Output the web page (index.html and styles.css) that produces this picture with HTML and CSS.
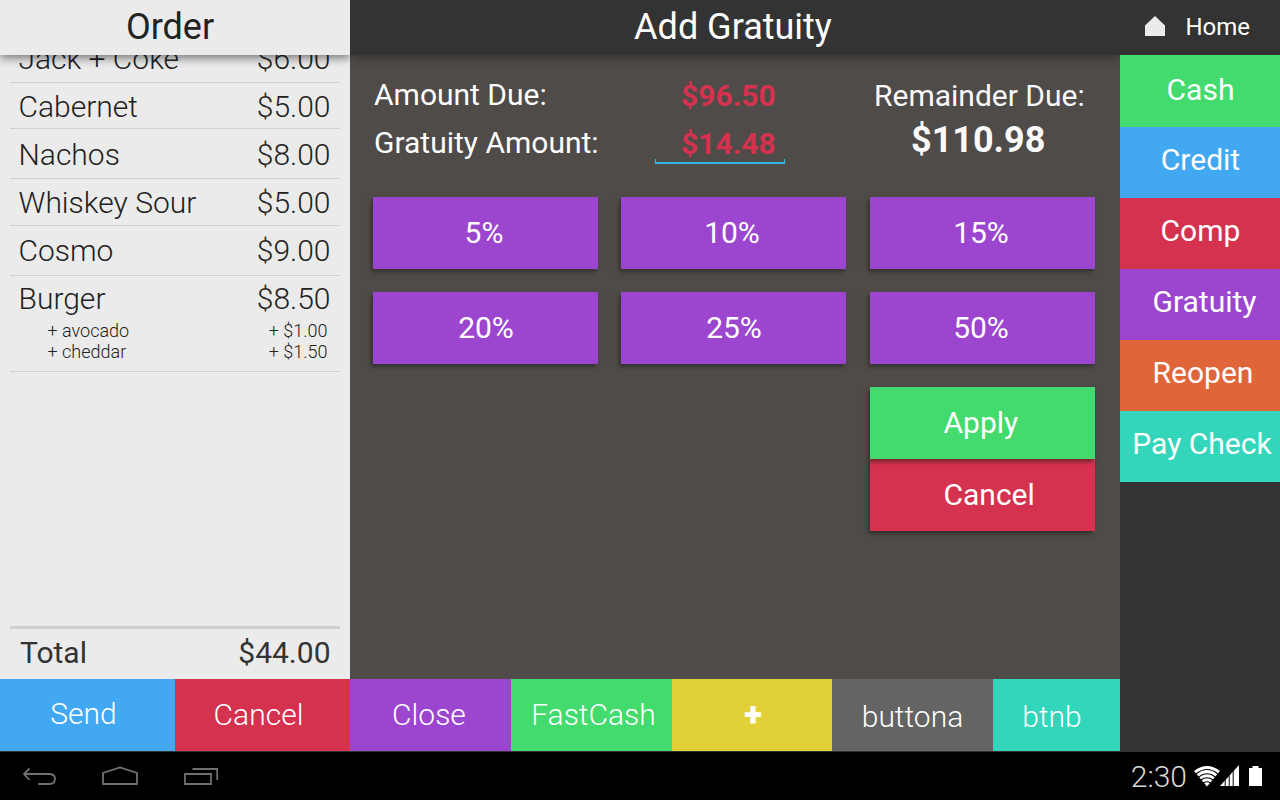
FILE: index.html
```html
<!DOCTYPE html>
<html lang="en">
<head>
<meta charset="utf-8">
<title>Add Gratuity</title>
<link rel="stylesheet" href="styles.css">
</head>
<body>
<div class="app">
  <div class="work">
    <div class="panels">
      <section class="order">
        <h1 class="order-title"><span>Order</span></h1>
        <div class="items">
          <div class="item jack"><span>Jack + Coke</span><span>$6.00</span></div>
          <div class="item cabernet"><span>Cabernet</span><span>$5.00</span></div>
          <div class="item nachos"><span>Nachos</span><span>$8.00</span></div>
          <div class="item whiskey"><span>Whiskey Sour</span><span>$5.00</span></div>
          <div class="item cosmo"><span>Cosmo</span><span>$9.00</span></div>
          <div class="item burger">
            <span>Burger</span><span>$8.50</span>
            <div class="extra"><span>+ avocado</span><span>+ $1.00</span></div>
            <div class="extra"><span>+ cheddar</span><span>+ $1.50</span></div>
          </div>
        </div>
        <div class="total"><span>Total</span><span>$44.00</span></div>
      </section>
      <main class="payment">
        <h1 class="payment-title"><span>Add Gratuity</span></h1>
        <div class="content">
          <div class="summary">
            <div class="labels"><div>Amount Due:</div><div>Gratuity Amount:</div></div>
            <div class="values"><div>$96.50</div><div class="field">$14.48</div></div>
            <div class="remainder"><div>Remainder Due:</div><strong>$110.98</strong></div>
          </div>
          <div class="choices">
            <button class="btn purple">5%</button>
            <button class="btn purple">10%</button>
            <button class="btn purple">15%</button>
            <button class="btn purple twenty">20%</button>
            <button class="btn purple twenty-five">25%</button>
            <button class="btn purple">50%</button>
            <div class="confirm">
              <button class="btn green apply">Apply</button>
              <button class="btn red">Cancel</button>
            </div>
          </div>
        </div>
      </main>
    </div>
    <div class="actions">
      <button class="blue send">Send</button>
      <button class="red cancel">Cancel</button>
      <button class="purple close">Close</button>
      <button class="green fast">FastCash</button>
      <button class="yellow plus">+</button>
      <button class="gray extra-a">buttona</button>
      <button class="teal extra-b">btnb</button>
    </div>
  </div>
  <aside class="side">
    <div class="home">
      <svg class="home-icon" width="20" height="20" viewBox="0 0 20 20"><path d="M0 20V9.500L10 0L20 9.500V20Z" fill="#ebebeb"/></svg>
      <span>Home</span>
    </div>
    <button class="tab green cash">Cash</button>
    <button class="tab blue">Credit</button>
    <button class="tab red">Comp</button>
    <button class="tab purple gratuity">Gratuity</button>
    <button class="tab orange reopen">Reopen</button>
    <button class="tab teal paycheck">Pay Check</button>
  </aside>
</div>
<nav class="system">
  <svg class="nav-icons" width="220" height="48" viewBox="0 0 220 48" fill="none" stroke="#707070" stroke-width="1.8">
    <path d="M29.500 16.500L24 22L29.500 28M24 22H50Q55 22.500 55 27Q55 31.500 50 32H38"/>
    <path d="M103 32V21L120 15.500L137 21V32Z"/>
    <path d="M185 22H211V32H185ZM192.500 17H217.200V28"/>
  </svg>
  <div class="status">
    <span class="clock">2:30</span>
    <svg width="70" height="24" viewBox="0 0 70 24">
      <path d="M0 6Q13-4 26 6L13 21.500Z" fill="#fff"/>
      <g fill="none" stroke="#000" stroke-width="1.100"><path d="M2 9Q13 0 24 9M4.500 12Q13 5.500 21.500 12M7 15Q13 10.500 19 15M9.500 18Q13 15.500 16.500 18"/></g>
      <path d="M26 21L45 0V21Z" fill="#fff"/>
      <path d="M31.200 11V21M35.200 7V21M39.200 3V21" stroke="#000" stroke-width="1"/>
      <path d="M55 3H58.500V1H64.500V3H68V21H55Z" fill="#fff"/>
    </svg>
  </div>
</nav>
</body>
</html>
```
FILE: styles.css
```css
* { box-sizing: border-box; }
body {
  margin: 0;
  width: 1280px;
  height: 800px;
  overflow: hidden;
  background: #000;
  font: 400 30px/36px Roboto, sans-serif;
  color: #fff;
}
button { border: 0; padding: 0; margin: 0; font: inherit; color: #fff; }
h1 { margin: 0; height: 55px; font: 400 36px/54px Roboto, sans-serif; text-align: center; }

.green { background: #43db6d; }
.blue { background: #42a8f2; }
.red { background: #d5324f; }
.purple { background: #9c46cf; }
.orange { background: #e1653b; }
.teal { background: #33d6ba; }
.yellow { background: #e1d038; }
.gray { background: #646464; }

.app { display: flex; height: 752px; border-bottom: 1px solid #333; background: #333; }
.work { width: 1120px; display: flex; flex-direction: column; }
.panels { display: flex; height: 679px; }

.order {
  width: 350px;
  display: flex;
  flex-direction: column;
  background: #ebebeb;
  color: #222;
}
.order-title { padding-right: 10px; background: #ebebeb; position: relative; box-shadow: 0 3px 9px rgba(0, 0, 0, .5); clip-path: inset(0 0 -14px 0); }
.items { flex: 1; overflow: hidden; padding: 0 10px; font-weight: 300; }
.item {
  display: flex;
  flex-wrap: wrap;
  align-content: flex-start;
  justify-content: space-between;
  padding: 6px 9.5px 0 8.5px;
  height: 50px;
  border-bottom: 1px solid #cfcfcf;
}
.jack { height: 46px; margin-top: -18px; padding-top: 4px; }
.cabernet { height: 46px; }
.nachos { padding-top: 8px; }
.whiskey { height: 47px; }
.cosmo { padding-top: 7px; }
.burger { height: 96px; padding-top: 5px; }
.extra {
  width: 100%;
  display: flex;
  justify-content: space-between;
  padding: 0 3px 0 29px;
  font-size: 18px;
  line-height: 21px;
  position: relative;
  top: 3px;
}
.total {
  height: 53px;
  margin: 0 10px;
  padding: 6px 9.5px 0 10px;
  border-top: 3px solid #cfcfcf;
  display: flex;
  justify-content: space-between;
  color: #333;
}

.payment { width: 770px; background: #4f4b49; }
.payment-title { background: #333; padding-right: 4px; box-shadow: 0 3px 9px rgba(30, 35, 28, .55); clip-path: inset(0 0 -14px 0); }
.content { padding: 22px 25px 0 23px; }
.summary { display: flex; height: 120px; }
.labels { width: 282px; padding-left: 1px; }
.labels div { height: 48px; }
.values { width: 130px; padding-top: 1px; font-weight: 700; color: #d5324f; }
.values div { height: 48px; padding-left: 26px; }
.values .field {
  height: 38px;
  background:
    linear-gradient(#33b5e5, #33b5e5) 0 100% / 100% 2px no-repeat,
    linear-gradient(#33b5e5, #33b5e5) 0 100% / 1px 5px no-repeat,
    linear-gradient(#33b5e5, #33b5e5) 100% 100% / 1px 5px no-repeat;
}
.remainder { margin-left: 89px; padding-top: 1px; color: #fbf9fa; }
.remainder strong { display: block; padding: 8px 0 0 37px; font-size: 36px; }
.choices { display: grid; grid-template-columns: 248px 249px 225px; row-gap: 23px; }
.btn { width: 225px; height: 72px; padding: 0 3px 1px 0; box-shadow: -2px 3px 4px rgba(25, 25, 20, .5); }
.twenty { padding-right: 0; padding-left: 1px; }
.twenty-five { padding-left: 4px; }
.confirm { grid-column: 3; display: flex; flex-direction: column; }
.confirm .btn { text-align: left; padding-left: 73.5px; }
.apply { position: relative; }

.actions { display: flex; height: 72px; font-weight: 300; }
.actions button { height: 72px; }
.actions .send { width: 175px; padding: 0 8px 3px 0; }
.actions .cancel { width: 175px; padding: 0 8px 1px 0; }
.actions .close { width: 161px; padding: 0 3px 1px 0; }
.actions .fast { width: 161px; padding: 0 0 1px 4px; }
.actions .plus { width: 160px; padding-left: 2px; font-size: 33px; font-weight: 900; }
.actions .extra-a { width: 161px; padding-top: 3px; }
.actions .extra-b { width: 127px; padding: 3px 9px 0 0; }

.side { width: 160px; display: flex; flex-direction: column; }
.home { height: 55px; display: flex; align-items: center; padding: 0 0 2px 25px; font-size: 24px; }
.home-icon { margin: 0 20.5px 2px 0; }
.tab { height: 71px; padding-bottom: 5px; padding-left: 1px; white-space: nowrap; }
.cash { height: 72px; padding-bottom: 2px; }
.gratuity { padding-left: 9px; }
.reopen { padding-left: 6px; }
.paycheck { padding-left: 4px; }

.system { height: 48px; display: flex; justify-content: space-between; background: #000; }
.status { display: flex; padding: 7px 16px 0 0; }
.status svg { margin: 6px 0 0 7px; }
.clock { font-weight: 300; color: #d8d8d8; }
```
